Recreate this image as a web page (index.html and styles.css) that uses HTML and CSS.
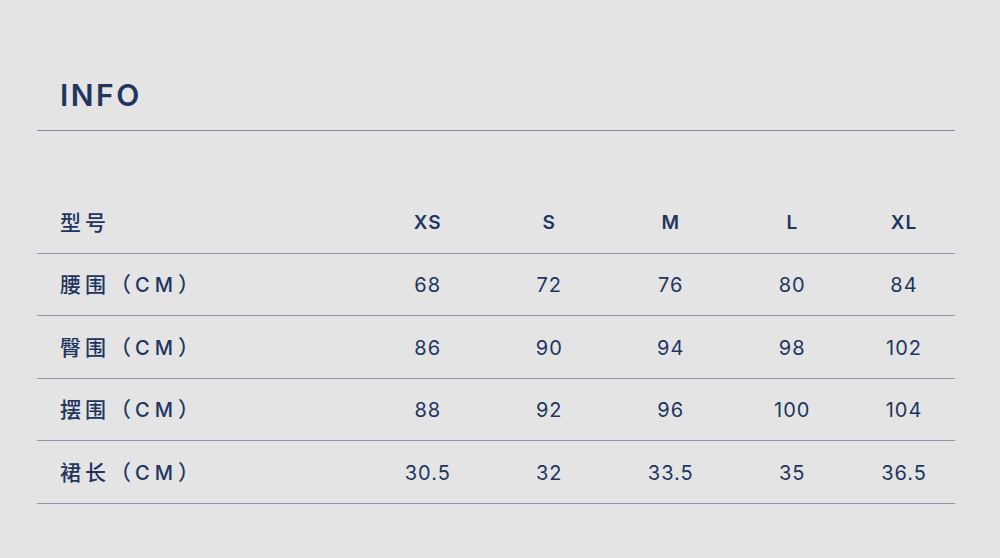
FILE: index.html
```html
<!DOCTYPE html>
<html lang="zh">
<head>
<meta charset="utf-8">
<link rel="stylesheet" href="styles.css">
</head>
<body>
<div class="page">
  <div class="title">INFO</div>
  <div class="table">
    <div class="row head">
      <div class="label">型号</div><div class="cell">XS</div><div class="cell">S</div><div class="cell">M</div><div class="cell">L</div><div class="cell">XL</div>
    </div>
    <div class="row">
      <div class="label">腰围（<span class="unit">CM</span>）</div><div class="cell">68</div><div class="cell">72</div><div class="cell">76</div><div class="cell">80</div><div class="cell">84</div>
    </div>
    <div class="row">
      <div class="label">臀围（<span class="unit">CM</span>）</div><div class="cell">86</div><div class="cell">90</div><div class="cell">94</div><div class="cell">98</div><div class="cell">102</div>
    </div>
    <div class="row">
      <div class="label">摆围（<span class="unit">CM</span>）</div><div class="cell">88</div><div class="cell">92</div><div class="cell">96</div><div class="cell">100</div><div class="cell">104</div>
    </div>
    <div class="row">
      <div class="label">裙长（<span class="unit">CM</span>）</div><div class="cell">30.5</div><div class="cell">32</div><div class="cell">33.5</div><div class="cell">35</div><div class="cell">36.5</div>
    </div>
  </div>
</div>
</body>
</html>
```
FILE: styles.css
```css
html, body {
  margin: 0;
  padding: 0;
  background: #e4e4e4;
}
body {
  width: 1000px;
  height: 558px;
  overflow: hidden;
  font-family: Inter, "Noto Sans CJK SC", sans-serif;
  color: #22355f;
}
.page {
  margin: 0 45px 0 37px;
  padding-top: 74px;
}
.title {
  padding-left: 23px;
  font-size: 30px;
  font-weight: 600;
  letter-spacing: 2.5px;
  line-height: 42px;
  padding-bottom: 14px;
  border-bottom: 1px solid #858ea2;
}
.table {
  margin-top: 60px;
}
.row {
  display: grid;
  grid-template-columns: 330px 121.5px 121.5px 121.5px 121.5px 102px;
  align-items: center;
  border-bottom: 1px solid #8f98ab;
  font-size: 20px;
  padding-top: 2px;
  box-sizing: border-box;
  height: 62.5px;
}
.label {
  padding-left: 23px;
  padding-bottom: 4px;
  font-weight: 500;
  font-size: 21px;
  letter-spacing: 4px;
}
.unit {
  font-size: 20px;
  letter-spacing: 5px;
}
.cell {
  text-align: center;
  font-weight: 400;
  letter-spacing: 1px;
}
.head .cell {
  font-weight: 600;
  font-size: 19px;
}
```
